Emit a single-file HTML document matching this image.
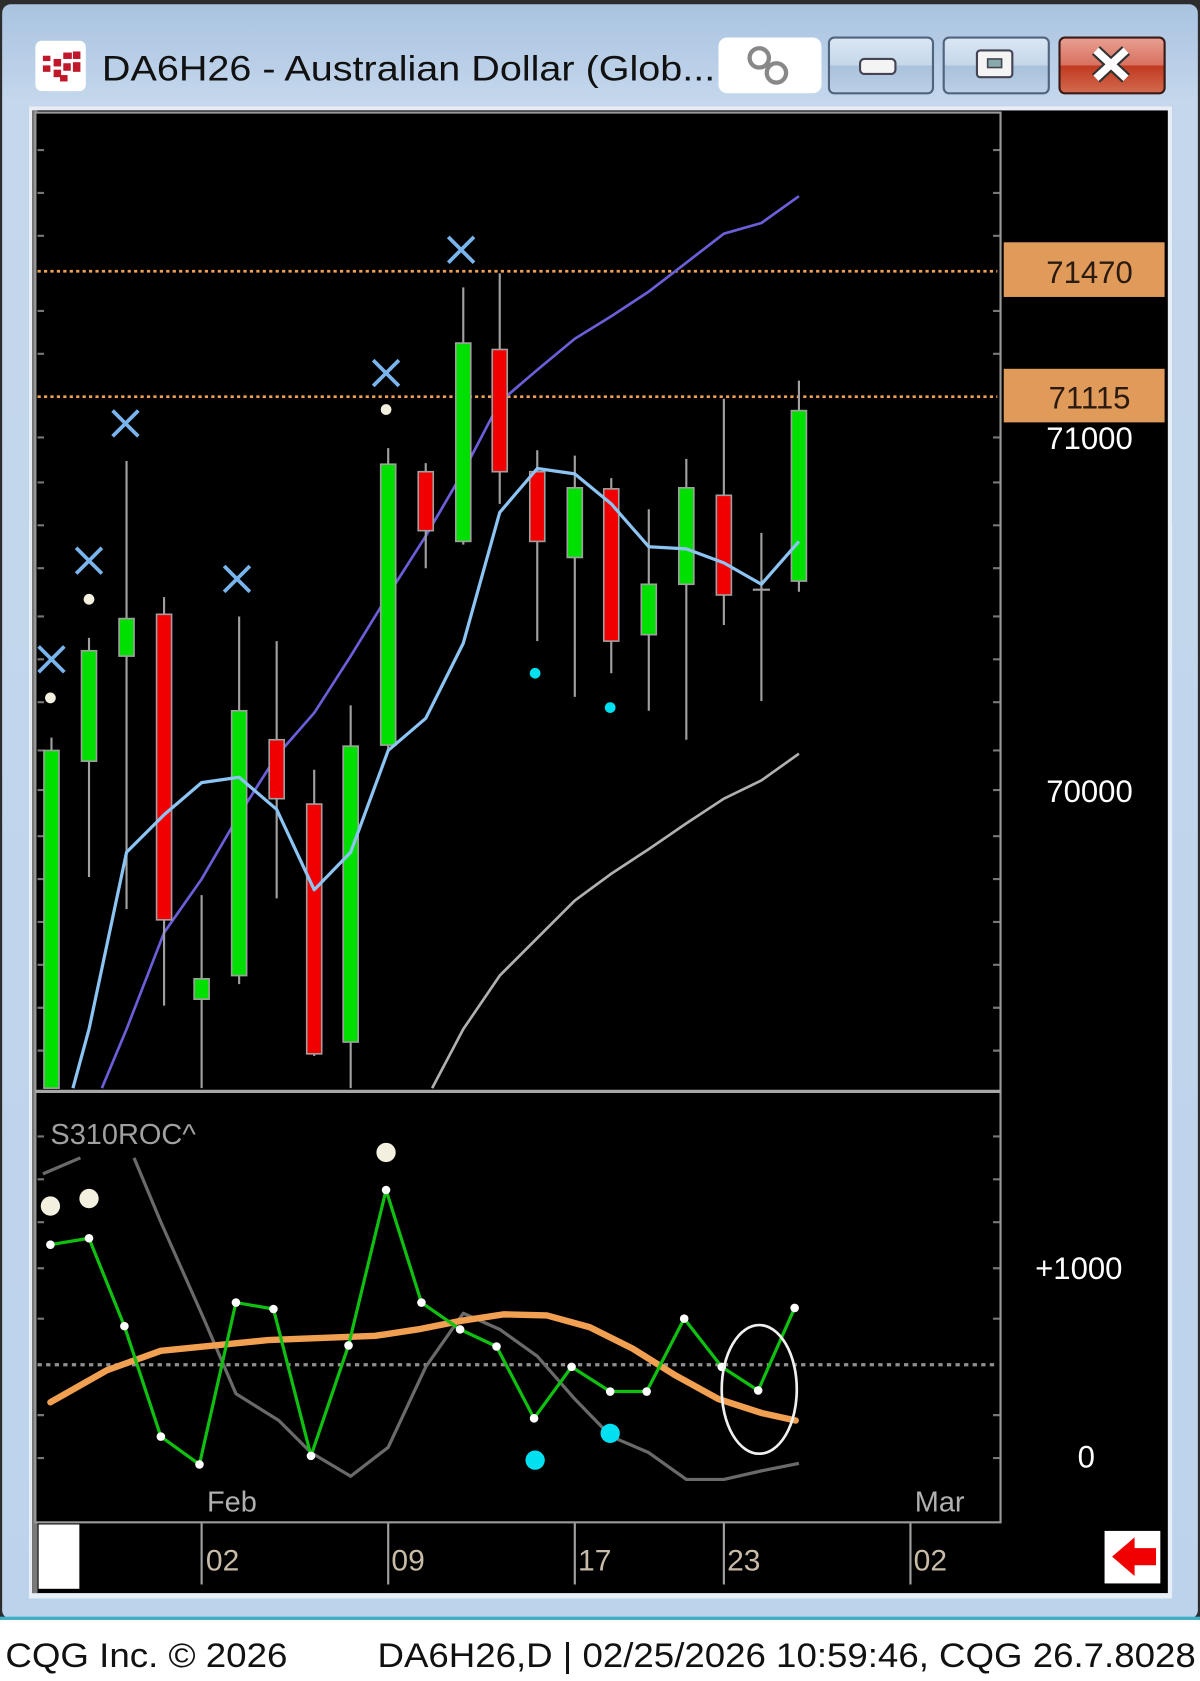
<!DOCTYPE html>
<html><head><meta charset="utf-8"><style>
html,body{margin:0;padding:0;background:#fff;width:1200px;height:1681px;overflow:hidden}
svg{display:block}
text{font-family:"Liberation Sans",sans-serif}
</style></head><body>
<svg width="1200" height="1681" viewBox="0 0 1119 1568" preserveAspectRatio="none" xmlns="http://www.w3.org/2000/svg">
<defs>
<linearGradient id="fr" x1="0" y1="0" x2="0" y2="1"><stop offset="0" stop-color="#a9c3e0"/><stop offset="0.06" stop-color="#c4d7ec"/><stop offset="1" stop-color="#bdd3ec"/></linearGradient>
<linearGradient id="bt" x1="0" y1="0" x2="0" y2="1"><stop offset="0" stop-color="#dbe7f4"/><stop offset="0.5" stop-color="#c5d7ea"/><stop offset="0.5" stop-color="#a9c1dc"/><stop offset="1" stop-color="#bcd0e6"/></linearGradient>
<linearGradient id="rb" x1="0" y1="0" x2="0" y2="1"><stop offset="0" stop-color="#e8a093"/><stop offset="0.5" stop-color="#d8705e"/><stop offset="0.5" stop-color="#c0391f"/><stop offset="1" stop-color="#d26a4f"/></linearGradient>
</defs>
<rect x="0" y="0" width="1119" height="1515" fill="#2c2c2c"/>
<rect x="2" y="4" width="1115" height="1506" rx="8" fill="url(#fr)"/>
<rect x="0" y="1508" width="1119" height="3" fill="#3ab0c8"/>
<rect x="0" y="1511" width="1119" height="57" fill="#fff"/>
<!-- title -->
<rect x="33" y="38" width="47" height="47" rx="6" fill="#fff"/>
<g fill="#c0182a"><rect x="40" y="52" width="7" height="5"/><rect x="40" y="61" width="7" height="6"/><rect x="50" y="55" width="7" height="7"/><rect x="50" y="65" width="7" height="7"/><rect x="59" y="49" width="8" height="6"/><rect x="59" y="59" width="7" height="7"/><rect x="68" y="48" width="7" height="7"/><rect x="68" y="58" width="7" height="9"/><rect x="56" y="70" width="7" height="6"/></g>
<text x="95" y="75" font-size="33" fill="#111" textLength="572" lengthAdjust="spacingAndGlyphs">DA6H26 - Australian Dollar (Glob...</text>
<rect x="670" y="35" width="96" height="52" rx="8" fill="#fff"/>
<g fill="none" stroke="#888" stroke-width="4"><circle cx="708" cy="54" r="9"/><circle cx="724" cy="68" r="9"/></g>
<rect x="773" y="35" width="97" height="52" rx="5" fill="url(#bt)" stroke="#50647e" stroke-width="2"/>
<rect x="802" y="55" width="33" height="14" rx="4" fill="#f4f4f4" stroke="#445" stroke-width="2"/>
<rect x="880" y="35" width="98" height="52" rx="5" fill="url(#bt)" stroke="#50647e" stroke-width="2"/>
<rect x="911" y="47" width="33" height="25" rx="3" fill="#f4f4f4" stroke="#445" stroke-width="2"/><rect x="921" y="55" width="13" height="8" fill="#8aa" stroke="#445" stroke-width="1.5"/>
<rect x="988" y="35" width="98" height="52" rx="5" fill="url(#rb)" stroke="#3a1a16" stroke-width="2"/>
<path d="M1022 47 L1050 73 M1050 47 L1022 73" stroke="#333" stroke-width="11"/>
<path d="M1022 47 L1050 73 M1050 47 L1022 73" stroke="#fff" stroke-width="7"/>
<!-- chart area -->
<rect x="27" y="99" width="1066" height="390" fill="#8a8a8a"/>
<rect x="27" y="99" width="1066" height="1392" fill="#e8eef6"/>
<rect x="30" y="103" width="1059" height="1383" fill="#000"/>
<rect x="30" y="103" width="5" height="1383" fill="#7a7a7a"/>
<rect x="33" y="105" width="900" height="1315" fill="#000" stroke="#9a9a9a" stroke-width="2"/>
<line x1="33" y1="1018" x2="933" y2="1018" stroke="#a8a8a8" stroke-width="3"/>
<g stroke="#777" stroke-width="2">
<path d="M35 140h6M35 180h6M35 220h6M35 290h6M35 330h6M35 408h6M35 450h6M35 490h6M35 530h6M35 575h6M35 615h6M35 655h6M35 700h6M35 737h6M35 780h6M35 820h6M35 860h6M35 900h6M35 940h6M35 980h6"/>
<path d="M926 140h6M926 180h6M926 220h6M926 290h6M926 330h6M926 408h6M926 450h6M926 490h6M926 530h6M926 575h6M926 615h6M926 655h6M926 700h6M926 737h6M926 780h6M926 820h6M926 860h6M926 900h6M926 940h6M926 980h6"/>
<path d="M35 1060h6M35 1100h6M35 1140h6M35 1183h6M35 1230h6M35 1320h6M35 1360h6M926 1060h6M926 1100h6M926 1140h6M926 1183h6M926 1230h6M926 1320h6M926 1360h6"/>
</g>
<!-- orange lines -->
<g stroke="#f0a050" stroke-width="2.5" stroke-dasharray="3 3"><line x1="35" y1="253" x2="930" y2="253"/><line x1="35" y1="370" x2="930" y2="370"/></g>
<rect x="936" y="226" width="150" height="51" fill="#e09a5a"/>
<rect x="936" y="344" width="150" height="50" fill="#e09a5a"/>
<g font-size="29" text-anchor="middle"><text x="1016" y="264" fill="#2a1a10">71470</text><text x="1016" y="381" fill="#2a1a10">71115</text>
<text x="1016" y="419" fill="#fff">71000</text><text x="1016" y="748" fill="#fff">70000</text>
<text x="1006" y="1193" fill="#fff">+1000</text><text x="1013" y="1369" fill="#fff">0</text></g>
<!-- MA lines -->
<g fill="none" stroke-linejoin="round">
<polyline stroke="#b0b0b0" stroke-width="2.5" points="403,1015 432,960 466,910 501,875 536,840 570,815 605,792 640,768 675,745 710,728 745,703"/>
<polyline stroke="#6a5fd8" stroke-width="2.5" points="95,1015 118,960 153,870 188,820 223,760 258,705 293,665 327,612 362,555 397,500 432,440 466,375 501,345 536,316 570,295 605,272 640,245 675,218 710,208 745,183"/>
</g>
<!-- candles -->
<g stroke="#a0a0a0" stroke-width="2">
<path d="M48 688V1015M83 595V818M118 430V848M153 557V938M188 835V1015M223 575V918M258 598V838M293 718V985M327 658V1015M362 418V700M397 432V530M432 268V508M466 255V470M501 420V598M536 425V650M570 446V628M605 475V663M640 428V690M675 372V583M710 497V654M745 355V552M702 550H718"/>
</g>
<g stroke="#a0a0a0" stroke-width="1.5">
<rect x="41" y="700" width="14" height="315" fill="#00e000"/>
<rect x="76" y="607" width="14" height="103" fill="#00e000"/>
<rect x="111" y="577" width="14" height="35" fill="#00e000"/>
<rect x="146" y="573" width="14" height="285" fill="#f00000"/>
<rect x="181" y="913" width="14" height="19" fill="#00e000"/>
<rect x="216" y="663" width="14" height="247" fill="#00e000"/>
<rect x="251" y="690" width="14" height="55" fill="#f00000"/>
<rect x="286" y="750" width="14" height="233" fill="#f00000"/>
<rect x="320" y="696" width="14" height="276" fill="#00e000"/>
<rect x="355" y="433" width="14" height="262" fill="#00e000"/>
<rect x="390" y="440" width="14" height="55" fill="#f00000"/>
<rect x="425" y="320" width="14" height="185" fill="#00e000"/>
<rect x="459" y="326" width="14" height="114" fill="#f00000"/>
<rect x="494" y="440" width="14" height="65" fill="#f00000"/>
<rect x="529" y="455" width="14" height="65" fill="#00e000"/>
<rect x="563" y="456" width="14" height="142" fill="#f00000"/>
<rect x="598" y="545" width="14" height="47" fill="#00e000"/>
<rect x="633" y="455" width="14" height="90" fill="#00e000"/>
<rect x="668" y="462" width="14" height="93" fill="#f00000"/>
<rect x="738" y="383" width="14" height="159" fill="#00e000"/>
</g>
<polyline fill="none" stroke="#8cc4f4" stroke-width="3" stroke-linejoin="round" points="68,1015 83,960 118,795 153,760 188,730 223,725 258,755 293,830 327,795 362,700 397,670 432,600 466,478 501,437 536,442 570,470 605,510 640,512 675,525 710,545 745,505"/>
<g stroke="#7ab4ec" stroke-width="3.5">
<path d="M36 603l24 24M60 603l-24 24M71 511l24 24M95 511l-24 24M105 383l24 24M129 383l-24 24M209 528l24 24M233 528l-24 24M348 336l24 24M372 336l-24 24M418 221l24 24M442 221l-24 24"/>
</g>
<g fill="#f4f0e0"><circle cx="47" cy="651" r="5"/><circle cx="83" cy="559" r="5"/><circle cx="360" cy="382" r="5"/></g>
<g fill="#00e0f0"><circle cx="499" cy="628" r="5"/><circle cx="569" cy="660" r="5"/></g>
<!-- lower panel -->
<text x="47" y="1067" font-size="27" fill="#a0a0a0">S310ROC^</text>
<line x1="35" y1="1273" x2="930" y2="1273" stroke="#909090" stroke-width="3" stroke-dasharray="4 4"/>
<polyline fill="none" stroke="#6a6a6a" stroke-width="3" points="40,1095 75,1080"/>
<polyline fill="none" stroke="#6a6a6a" stroke-width="3" stroke-linejoin="round" points="125,1080 150,1140 190,1230 220,1300 260,1325 290,1355 327,1377 362,1350 397,1275 432,1225 466,1240 501,1265 536,1305 570,1340 605,1355 640,1380 675,1380 710,1372 745,1365"/>
<polyline fill="none" stroke="#f0a050" stroke-width="6" stroke-linejoin="round" stroke-linecap="round" points="47,1308 100,1278 150,1260 200,1255 250,1250 300,1248 350,1246 390,1240 430,1232 470,1226 510,1227 550,1238 590,1258 630,1283 670,1305 710,1318 742,1325"/>
<polyline fill="none" stroke="#10c010" stroke-width="3" stroke-linejoin="round" points="47,1161 83,1155 116,1237 150,1340 186,1366 220,1215 255,1221 290,1358 325,1255 360,1110 393,1215 429,1240 463,1256 498,1323 533,1275 569,1298 603,1298 638,1230 673,1275 707,1297 741,1220"/>
<g fill="#fff"><circle cx="47" cy="1161" r="4"/><circle cx="83" cy="1155" r="4"/><circle cx="116" cy="1237" r="4"/><circle cx="150" cy="1340" r="4"/><circle cx="186" cy="1366" r="4"/><circle cx="220" cy="1215" r="4"/><circle cx="255" cy="1221" r="4"/><circle cx="290" cy="1358" r="4"/><circle cx="325" cy="1255" r="4"/><circle cx="360" cy="1110" r="4"/><circle cx="393" cy="1215" r="4"/><circle cx="429" cy="1240" r="4"/><circle cx="463" cy="1256" r="4"/><circle cx="498" cy="1323" r="4"/><circle cx="533" cy="1275" r="4"/><circle cx="569" cy="1298" r="4"/><circle cx="603" cy="1298" r="4"/><circle cx="638" cy="1230" r="4"/><circle cx="673" cy="1275" r="4"/><circle cx="707" cy="1297" r="4"/><circle cx="741" cy="1220" r="4"/></g>
<g fill="#f4f0e0"><circle cx="47" cy="1125" r="9"/><circle cx="83" cy="1118" r="9"/><circle cx="360" cy="1075" r="9"/></g>
<g fill="#00e0f0"><circle cx="499" cy="1362" r="9"/><circle cx="569" cy="1337" r="9"/></g>
<ellipse cx="708" cy="1296" rx="35" ry="60" fill="none" stroke="#f0f0f0" stroke-width="2.5"/>
<text x="193" y="1410" font-size="27" fill="#b0b0b0">Feb</text>
<text x="853" y="1410" font-size="27" fill="#b0b0b0">Mar</text>
<!-- date axis -->
<g stroke="#a0a0a0" stroke-width="2"><path d="M188 1421V1478M362 1421V1478M536 1421V1478M675 1421V1478M849 1421V1478"/></g>
<g font-size="28" fill="#c8bca8"><text x="192" y="1465">02</text><text x="365" y="1465">09</text><text x="539" y="1465">17</text><text x="678" y="1465">23</text><text x="852" y="1465">02</text></g>
<rect x="36" y="1422" width="38" height="60" fill="#fff"/>
<rect x="1030" y="1428" width="52" height="49" fill="#fff"/>
<path d="M1037 1452 L1058 1434 L1058 1444 L1078 1444 L1078 1460 L1058 1460 L1058 1470 Z" fill="#f00000"/>
<!-- footer -->
<text x="5" y="1555" font-size="32" fill="#111" textLength="263" lengthAdjust="spacingAndGlyphs">CQG Inc. © 2026</text>
<text x="352" y="1555" font-size="32" fill="#111" textLength="763" lengthAdjust="spacingAndGlyphs">DA6H26,D | 02/25/2026 10:59:46, CQG 26.7.8028</text>
</svg>
</body></html>
